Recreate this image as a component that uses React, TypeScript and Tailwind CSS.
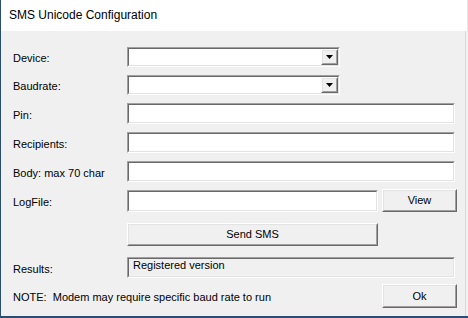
import React from "react";

const sunken =
  "border-t-[1px] border-l-[1px] border-b-[1px] border-r-[1px] border-t-[#a0a0a0] border-l-[#a0a0a0] border-b-white border-r-white";

function Sunken({ className, children }: { className: string; children?: React.ReactNode }) {
  return (
    <div className={`${sunken} ${className}`}>
      <div className="w-full h-full border-t border-l border-b border-r border-t-[#696969] border-l-[#696969] border-b-[#e3e3e3] border-r-[#e3e3e3] flex items-center">
        {children}
      </div>
    </div>
  );
}

function Raised({ className, children }: { className: string; children?: React.ReactNode }) {
  return (
    <div className={`border border-t-white border-l-white border-b-[#696969] border-r-[#696969] ${className}`}>
      <div className="w-full h-full border border-t-[#e3e3e3] border-l-[#e3e3e3] border-b-[#a0a0a0] border-r-[#a0a0a0] bg-[#f0f0f0] flex items-center justify-center">
        {children}
      </div>
    </div>
  );
}

function Label({ text }: { text: string }) {
  return <div className="w-[126px] shrink-0 pl-[12px] pt-[3px] whitespace-pre">{text}</div>;
}

function Combo() {
  return (
    <Sunken className="w-[213px] h-[20px] bg-white">
      <div className="flex-1" />
      <Raised className="w-[17px] h-[16px]">
        <svg width="7" height="4" viewBox="0 0 7 4">
          <polygon points="0,0 7,0 3.5,4" fill="#000" />
        </svg>
      </Raised>
    </Sunken>
  );
}

export default function App() {
  return (
    <div
      className="w-[468px] h-[318px] bg-[#f0f0f0] text-black text-[11px] leading-[13px] flex flex-col border-l-[1px] border-b-[2px] border-l-[#2a4d74] border-b-[#2a4d74] overflow-hidden"
      style={{ fontFamily: '"Liberation Sans", Arial, sans-serif' }}
    >
      <div className="h-[31px] bg-white flex items-center pl-[8px] text-[12px] border-r border-r-[#e8e8e8] shrink-0">
        SMS Unicode Configuration
      </div>
      <div className="flex-1 flex flex-col border-r border-r-[#dadada] mr-[2px]">
        <div className="flex items-center mt-[16px] h-[20px]">
          <Label text="Device:" />
          <Combo />
        </div>
        <div className="flex items-center mt-[8px] h-[20px]">
          <Label text="Baudrate:" />
          <Combo />
        </div>
        <div className="flex items-center mt-[8px] h-[21px]">
          <Label text="Pin:" />
          <Sunken className="w-[328px] h-[21px] bg-white" />
        </div>
        <div className="flex items-center mt-[8px] h-[21px]">
          <Label text="Recipients:" />
          <Sunken className="w-[328px] h-[21px] bg-white" />
        </div>
        <div className="flex items-center mt-[8px] h-[21px]">
          <Label text="Body: max 70 char" />
          <Sunken className="w-[328px] h-[21px] bg-white" />
        </div>
        <div className="flex items-center mt-[7px] h-[23px]">
          <Label text="LogFile:" />
          <Sunken className="w-[251px] h-[22px] bg-white" />
          <Raised className="ml-[4px] w-[75px] h-[23px]">View</Raised>
        </div>
        <div className="flex items-center mt-[11px] h-[23px]">
          <div className="w-[126px] shrink-0" />
          <Raised className="w-[251px] h-[23px]">Send SMS</Raised>
        </div>
        <div className="flex items-center mt-[11px] h-[21px]">
          <Label text="Results:" />
          <Sunken className="w-[328px] h-[21px]">
            <span className="pl-[4px] -mt-[4px]">Registered version</span>
          </Sunken>
        </div>
        <div className="flex items-center mt-[6px] h-[24px]">
          <div className="w-[381px] shrink-0 pl-[12px] pt-[2px] whitespace-pre">
            NOTE:  Modem may require specific baud rate to run
          </div>
          <Raised className="w-[75px] h-[24px]">Ok</Raised>
        </div>
      </div>
    </div>
  );
}
